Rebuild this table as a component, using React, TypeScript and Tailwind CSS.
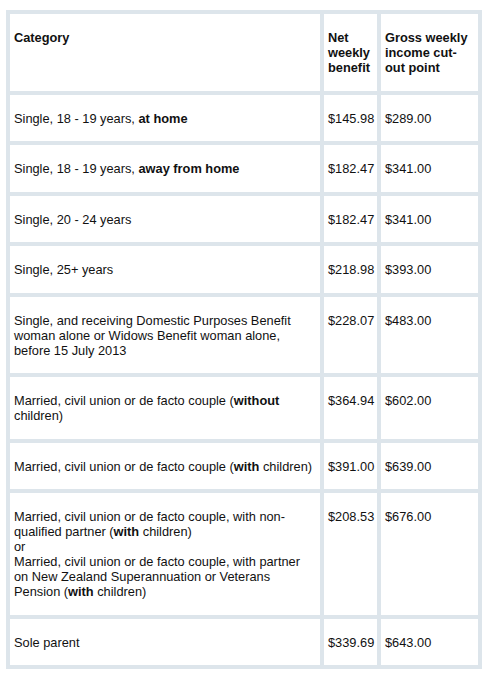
import React from 'react';

type Row = {
  category: React.ReactNode;
  net: string;
  gross: string;
};

const rows: Row[] = [
  {
    category: (
      <>
        Single, 18 - 19 years, <b>at home</b>
      </>
    ),
    net: '$145.98',
    gross: '$289.00',
  },
  {
    category: (
      <>
        Single, 18 - 19 years, <b>away from home</b>
      </>
    ),
    net: '$182.47',
    gross: '$341.00',
  },
  { category: 'Single, 20 - 24 years', net: '$182.47', gross: '$341.00' },
  { category: 'Single, 25+ years', net: '$218.98', gross: '$393.00' },
  {
    category: (
      <>
        Single, and receiving Domestic Purposes Benefit
        <br />
        woman alone or Widows Benefit woman alone,
        <br />
        before 15 July 2013
      </>
    ),
    net: '$228.07',
    gross: '$483.00',
  },
  {
    category: (
      <>
        Married, civil union or de facto couple (<b>without</b>
        <br />
        children)
      </>
    ),
    net: '$364.94',
    gross: '$602.00',
  },
  {
    category: (
      <>
        Married, civil union or de facto couple (<b>with</b> children)
      </>
    ),
    net: '$391.00',
    gross: '$639.00',
  },
  {
    category: (
      <>
        Married, civil union or de facto couple, with non-
        <br />
        qualified partner (<b>with</b> children)
        <br />
        or
        <br />
        Married, civil union or de facto couple, with partner
        <br />
        on New Zealand Superannuation or Veterans
        <br />
        Pension (<b>with</b> children)
      </>
    ),
    net: '$208.53',
    gross: '$676.00',
  },
  { category: 'Sole parent', net: '$339.69', gross: '$643.00' },
];

const cell = 'bg-white px-[4px] pt-[16px] pb-[15.5px] leading-[15px] whitespace-nowrap';

export default function App() {
  return (
    <div className="min-h-[679px] w-[492px] bg-white pt-[10px] pl-[6px] font-['Liberation_Sans',Arial,sans-serif] text-[12.8px] text-[#111]">
      {/* 表格 */}
      <div className="grid w-[476px] grid-cols-[310px_53px_97px] gap-[4px] bg-[#dde5eb] p-[4px]">
        <div className={`${cell} font-bold`}>Category</div>
        <div className={`${cell} font-bold`}>
          Net
          <br />
          weekly
          <br />
          benefit
        </div>
        <div className={`${cell} font-bold`}>
          Gross weekly
          <br />
          income cut-
          <br />
          out point
        </div>

        {rows.map((r, i) => (
          <React.Fragment key={i}>
            <div className={cell}>{r.category}</div>
            <div className={cell}>{r.net}</div>
            <div className={cell}>{r.gross}</div>
          </React.Fragment>
        ))}
      </div>
    </div>
  );
}
